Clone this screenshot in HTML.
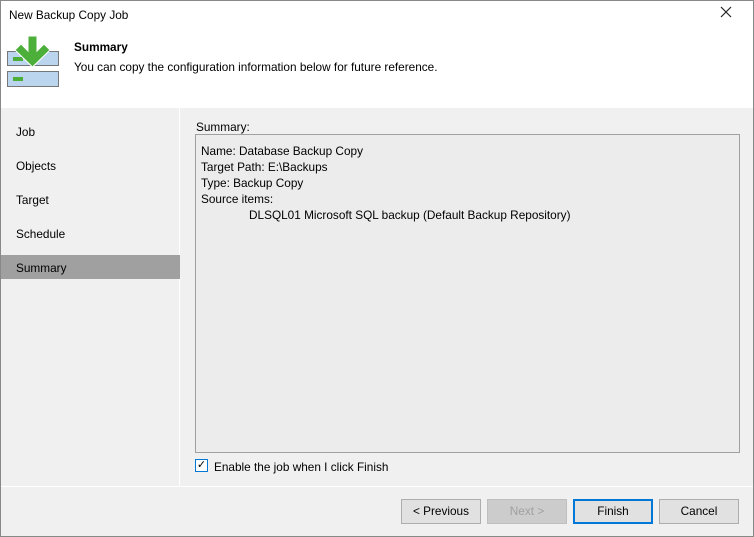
<!DOCTYPE html><html><head><style>
*{margin:0;padding:0;box-sizing:border-box}
body{width:754px;height:537px;overflow:hidden;font-family:"Liberation Sans",sans-serif;font-size:11.8px;color:#000;background:#f0f0f0;position:relative}
.win{position:absolute;left:0;top:0;width:754px;height:537px;border:1px solid #888}
.hdr{position:absolute;left:1px;top:1px;width:752px;height:107px;background:#fff}
.a{position:absolute;white-space:nowrap}
.nav{position:absolute;left:1px;top:108px;width:179px;height:378px;background:#f0f0f0;border-right:1px solid #fff}
.sel{position:absolute;left:1px;top:255px;width:179px;height:24px;background:#a0a0a0}
.box{position:absolute;left:195px;top:134px;width:545px;height:319px;border:1px solid #a0a0a0;background:#ececec}
.btn{position:absolute;top:499px;width:80px;height:25px;border:1px solid #adadad;background:#e1e1e1;text-align:center;line-height:23px}
</style></head><body>
<div class="win"></div>
<div class="hdr"></div>
<div class="a" style="left:9px;top:8px">New Backup Copy Job</div>
<svg class="a" style="left:720px;top:6px" width="12" height="12"><path d="M1 1L11 11M11 1L1 11" stroke="#222" stroke-width="1.2"/></svg>
<svg class="a" style="left:7px;top:36px" width="53" height="54">
<rect x="0.5" y="15.5" width="51" height="14" fill="#bcd5ee" stroke="#777"/>
<rect x="0.5" y="35.5" width="51" height="15" fill="#bcd5ee" stroke="#777"/>
<rect x="6" y="21" width="10" height="4" fill="#4caf3a"/>
<rect x="6" y="41" width="10" height="4" fill="#4caf3a"/>
<polygon points="21,0 30,0 30,15 37,8 43,14 25.5,31 8,14 14,8 21,15" fill="#4caf3a" stroke="#fff" stroke-width="1"/>
</svg>
<div class="a" style="left:74px;top:40px;font-weight:bold">Summary</div>
<div class="a" style="left:74px;top:60px">You can copy the configuration information below for future reference.</div>
<div class="nav"></div>
<div class="sel"></div>
<div class="a" style="left:16px;top:125px">Job</div>
<div class="a" style="left:16px;top:159px">Objects</div>
<div class="a" style="left:16px;top:193px">Target</div>
<div class="a" style="left:16px;top:227px">Schedule</div>
<div class="a" style="left:16px;top:261px">Summary</div>
<div class="a" style="left:196px;top:120px">Summary:</div>
<div class="box"></div>
<div class="a" style="left:201px;top:143px;line-height:16px">Name: Database Backup Copy<br>Target Path: E:\Backups<br>Type: Backup Copy<br>Source items:<br><span style="padding-left:48px">DLSQL01 Microsoft SQL backup (Default Backup Repository)</span></div>
<div class="a" style="left:195px;top:459px;width:13px;height:13px;border:1px solid #0078d7;background:#fff;font-size:11px;line-height:11px;text-align:center">✓</div>
<div class="a" style="left:214px;top:460px">Enable the job when I click Finish</div>
<div class="a" style="left:1px;top:486px;width:752px;height:1px;background:#fff"></div>
<div class="btn" style="left:401px">&lt; Previous</div>
<div class="btn" style="left:487px;background:#cccccc;border-color:#bfbfbf;color:#a0a0a0">Next &gt;</div>
<div class="btn" style="left:573px;border:2px solid #0078d7;line-height:21px">Finish</div>
<div class="btn" style="left:659px">Cancel</div>
</body></html>
